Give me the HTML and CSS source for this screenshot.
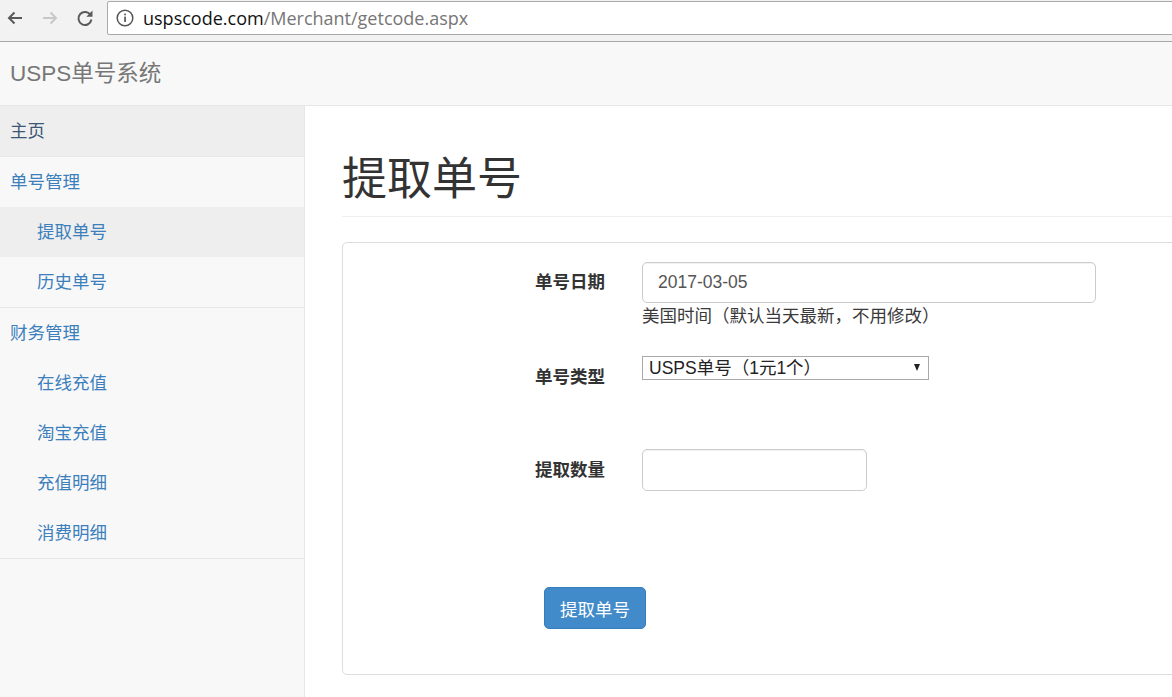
FILE: index.html
```html
<!DOCTYPE html>
<html lang="zh-CN">
<head>
    <meta charset="UTF-8">
    <meta name="viewport" content="width=device-width, initial-scale=1.0">
    <title>提取单号</title>
    <link rel="stylesheet" href="styles.css">
</head>
<body>
    <div class="browser">
        <div class="browser-nav">
            <svg class="nav-icon" width="20" height="20" viewBox="0 0 20 20">
                <path d="M17 10H4M9.5 4.5L4 10l5.5 5.5" fill="none" stroke="#5a5a5a" stroke-width="2"/>
            </svg>
            <svg class="nav-icon" width="20" height="20" viewBox="0 0 20 20">
                <path d="M3 10h13M10.5 4.5L16 10l-5.5 5.5" fill="none" stroke="#c8c8c8" stroke-width="2"/>
            </svg>
            <svg class="nav-icon" width="20" height="20" viewBox="0 0 20 20">
                <path d="M15.6 7.2A6.5 6.5 0 1 0 16.4 11.5" fill="none" stroke="#5a5a5a" stroke-width="2"/>
                <path d="M17.5 2.5v6.2h-6.2z" fill="#5a5a5a"/>
            </svg>
        </div>
        <div class="address">
            <svg class="info-icon" width="18" height="18" viewBox="0 0 18 18">
                <circle cx="9" cy="9" r="7.8" fill="none" stroke="#555" stroke-width="1.5"/>
                <rect x="8.2" y="7.6" width="1.7" height="5.4" fill="#555"/>
                <rect x="8.2" y="4.6" width="1.7" height="1.7" fill="#555"/>
            </svg>
            <span class="host">uspscode.com</span><span class="path">/Merchant/getcode.aspx</span>
        </div>
    </div>

    <nav class="navbar">
        <a href="" class="brand">USPS单号系统</a>
    </nav>

    <div class="main">
        <aside class="sidebar">
            <ul class="menu">
                <li class="group">
                    <a href="" class="item home active">主页</a>
                </li>
                <li class="group">
                    <a href="" class="item">单号管理</a>
                    <a href="" class="item sub active">提取单号</a>
                    <a href="" class="item sub">历史单号</a>
                </li>
                <li class="group">
                    <a href="" class="item">财务管理</a>
                    <a href="" class="item sub">在线充值</a>
                    <a href="" class="item sub">淘宝充值</a>
                    <a href="" class="item sub">充值明细</a>
                    <a href="" class="item sub">消费明细</a>
                </li>
            </ul>
        </aside>

        <div class="content">
            <div class="content-inner">
                <h1 class="page-title">提取单号</h1>
                <div class="panel">
                    <form class="form">
                        <div class="form-row row-date">
                            <label class="form-label">单号日期</label>
                            <div class="form-control-wrap">
                                <input type="text" class="input input-date" value="2017-03-05">
                                <div class="help">美国时间（默认当天最新，不用修改）</div>
                            </div>
                        </div>
                        <div class="form-row row-type">
                            <label class="form-label">单号类型</label>
                            <div class="select-wrap">
                                <select class="select">
                                    <option>USPS单号（1元1个）</option>
                                </select>
                            </div>
                        </div>
                        <div class="form-row row-count">
                            <label class="form-label">提取数量</label>
                            <input type="text" class="input input-count">
                        </div>
                        <button type="button" class="btn-submit">提取单号</button>
                    </form>
                </div>
            </div>
        </div>
    </div>
</body>
</html>
```

FILE: styles.css
```css
* {
    box-sizing: border-box;
}
html, body {
    margin: 0;
    height: 100%;
}
body {
    font-family: "Liberation Sans", "Noto Sans CJK SC", sans-serif;
    font-size: 17.5px;
    line-height: 25px;
    color: #333;
    background-color: #fff;
    overflow: hidden;
    display: flex;
    flex-direction: column;
}
a {
    text-decoration: none;
}

/* browser bar */
.browser {
    height: 42px;
    background-color: #f2f2f2;
    border-bottom: 1px solid #a8a8a8;
    display: flex;
    padding-top: 1px;
    flex-shrink: 0;
}
.browser-nav {
    display: flex;
    width: 107px;
    padding: 7px 0 0 5px;
    gap: 15px;
}
.nav-icon {
    display: block;
}
.address {
    flex: 1;
    height: 34px;
    margin-right: -4px;
    background-color: #fff;
    border: 1px solid #a9a9a9;
    border-radius: 2px;
    display: flex;
    align-items: center;
    padding-left: 8px;
    font-family: "Open Sans", "Liberation Sans", sans-serif;
    font-size: 18px;
}
.info-icon {
    margin-right: 9px;
}
.host {
    color: #111;
}
.path {
    color: #767676;
}

/* navbar */
.navbar {
    height: 64px;
    background-color: #f8f8f8;
    border-bottom: 1px solid #e7e7e7;
    display: flex;
    align-items: center;
    padding-left: 10px;
    flex-shrink: 0;
}
.brand {
    color: #777;
    font-size: 22.5px;
    line-height: 28px;
    padding-top: 1px;
}

/* layout */
.main {
    flex: 1;
    display: flex;
    min-height: 0;
}
.sidebar {
    width: 305px;
    background-color: #f8f8f8;
    border-right: 1px solid #e7e7e7;
    flex-shrink: 0;
}
.menu {
    list-style: none;
    margin: 0;
    padding: 0;
}
.group {
    border-bottom: 1px solid #e7e7e7;
}
.item {
    display: block;
    height: 50px;
    line-height: 50px;
    padding-left: 10px;
    color: #3c7fbd;
}
.item.sub {
    padding-left: 37px;
}
.item.active {
    background-color: #eee;
}
.item.home {
    color: #3b5775;
}

/* content */
.content {
    flex: 1;
    overflow: hidden;
    padding-left: 37px;
}
.content-inner {
    width: calc(100% + 40px);
}
.page-title {
    margin: 49px 0 25px;
    padding-bottom: 11px;
    border-bottom: 1px solid #eee;
    font-size: 45px;
    line-height: 50px;
    font-weight: 400;
    color: #333;
}
.panel {
    border: 1px solid #ddd;
    border-radius: 5px;
    height: 433px;
    padding: 19px 0 0 192px;
}
.form-row {
    display: flex;
    align-items: flex-start;
}
.form-label {
    width: 107px;
    font-weight: 700;
    color: #333;
}
.row-date .form-label {
    padding-top: 8px;
}
.input {
    display: block;
    border: 1px solid #ccc;
    border-radius: 5px;
    font-family: "Liberation Sans", "Noto Sans CJK SC", sans-serif;
    font-size: 17.5px;
    color: #555;
    padding: 0 15px;
    outline: none;
    box-shadow: inset 0 1px 1px rgba(0, 0, 0, 0.06);
}
.input-date {
    width: 454px;
    height: 41px;
}
.help {
    margin-top: 1px;
    color: #3a3a3a;
}
.row-type {
    margin-top: 27px;
}
.row-type .form-label {
    padding-top: 9px;
}
.select-wrap {
    position: relative;
}
.select-wrap::after {
    content: "";
    position: absolute;
    right: 9px;
    top: 8px;
    border-left: 3.5px solid transparent;
    border-right: 3.5px solid transparent;
    border-top: 7px solid #222;
    pointer-events: none;
}
.select {
    -webkit-appearance: none;
    appearance: none;
    display: block;
    width: 287px;
    height: 24px;
    border: 1px solid #a9a9a9;
    border-radius: 0;
    background-color: #fff;
    font-family: "Liberation Sans", "Noto Sans CJK SC", sans-serif;
    font-size: 17.5px;
    line-height: 22px;
    color: #222;
    padding: 0 0 0 6px;
    outline: none;
}
.row-count {
    margin-top: 59px;
    align-items: center;
}
.input-count {
    width: 225px;
    height: 42px;
}
.btn-submit {
    display: block;
    margin: 96px 0 0 9px;
    width: 102px;
    height: 42px;
    background-color: #428bca;
    border: 1px solid #357ebd;
    border-radius: 5px;
    color: #fff;
    font-family: "Liberation Sans", "Noto Sans CJK SC", sans-serif;
    font-size: 17.5px;
    cursor: pointer;
}
```
